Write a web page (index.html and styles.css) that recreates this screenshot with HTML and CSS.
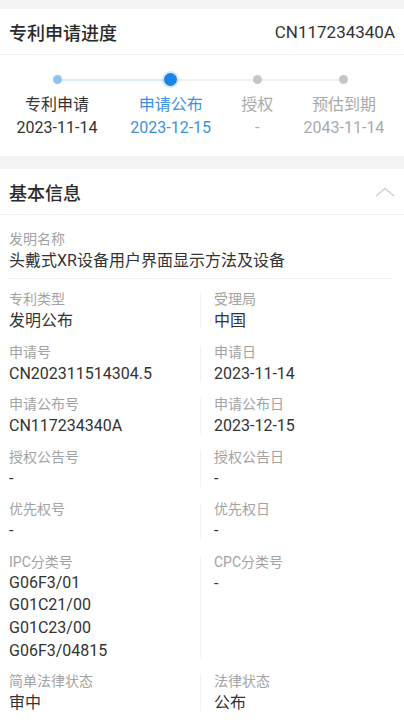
FILE: index.html
```html
<!DOCTYPE html>
<html lang="zh-CN">
<head>
  <meta charset="UTF-8" />
  <meta name="viewport" content="width=device-width, initial-scale=1.0" />
  <title>专利详情</title>
  <link rel="stylesheet" href="styles.css">
</head>
<body>
  <div class="card progress">
    <div class="card-head">
      <span class="card-title">专利申请进度</span>
      <span class="pub-no">CN117234340A</span>
    </div>
    <div class="steps">
      <div class="track track-done"></div>
      <div class="track track-todo"></div>
      <div class="step done">
        <i class="dot"></i>
        <div class="step-name">专利申请</div>
        <div class="step-date">2023-11-14</div>
      </div>
      <div class="step current">
        <i class="dot"></i>
        <div class="step-name">申请公布</div>
        <div class="step-date">2023-12-15</div>
      </div>
      <div class="step todo">
        <i class="dot"></i>
        <div class="step-name">授权</div>
        <div class="step-date">-</div>
      </div>
      <div class="step todo">
        <i class="dot"></i>
        <div class="step-name">预估到期</div>
        <div class="step-date">2043-11-14</div>
      </div>
    </div>
  </div>

  <div class="card info">
    <div class="card-head">
      <span class="card-title">基本信息</span>
      <svg class="chevron" width="20" height="10" viewBox="0 0 20 10">
        <polyline points="1,9 10,1.5 19,9" fill="none" stroke="#d2d2d2" stroke-width="1.5" />
      </svg>
    </div>
    <div class="info-body">
      <div class="field full">
        <div class="label">发明名称</div>
        <div class="value">头戴式XR设备用户界面显示方法及设备</div>
      </div>
      <div class="fields">
        <div class="field">
          <div class="label">专利类型</div>
          <div class="value">发明公布</div>
        </div>
        <div class="field right">
          <div class="label">受理局</div>
          <div class="value">中国</div>
        </div>
        <div class="field">
          <div class="label">申请号</div>
          <div class="value">CN202311514304.5</div>
        </div>
        <div class="field right">
          <div class="label">申请日</div>
          <div class="value">2023-11-14</div>
        </div>
        <div class="field">
          <div class="label">申请公布号</div>
          <div class="value">CN117234340A</div>
        </div>
        <div class="field right">
          <div class="label">申请公布日</div>
          <div class="value">2023-12-15</div>
        </div>
        <div class="field">
          <div class="label">授权公告号</div>
          <div class="value">-</div>
        </div>
        <div class="field right">
          <div class="label">授权公告日</div>
          <div class="value">-</div>
        </div>
        <div class="field">
          <div class="label">优先权号</div>
          <div class="value">-</div>
        </div>
        <div class="field right">
          <div class="label">优先权日</div>
          <div class="value">-</div>
        </div>
        <div class="field">
          <div class="label">IPC分类号</div>
          <div class="value multi">G06F3/01<br>G01C21/00<br>G01C23/00<br>G06F3/04815</div>
        </div>
        <div class="field right">
          <div class="label">CPC分类号</div>
          <div class="value">-</div>
        </div>
        <div class="field">
          <div class="label">简单法律状态</div>
          <div class="value">审中</div>
        </div>
        <div class="field right">
          <div class="label">法律状态</div>
          <div class="value">公布</div>
        </div>
      </div>
    </div>
  </div>
</body>
</html>
```

FILE: styles.css
```css
body {
  margin: 0;
  background: #f4f4f4;
  font-family: Roboto, "Noto Sans CJK SC", sans-serif;
  color: #333;
  padding-top: 9px;
}
.card {
  background: #fff;
}
.info {
  margin-top: 13px;
  min-height: 560px;
}
.card-head {
  height: 45px;
  padding: 0 9px;
  display: flex;
  align-items: center;
  justify-content: space-between;
  border-bottom: 1px solid #f0f0f0;
}
.card-title {
  font-size: 18px;
  font-weight: 500;
  color: #2a2a2a;
}
.pub-no {
  font-size: 17px;
  color: #333;
}

/* progress steps */
.steps {
  position: relative;
  display: grid;
  grid-template-columns: 86px 86px 32px 86px;
  justify-content: space-between;
  padding: 17px 17px 17px 14px;
}
.track {
  position: absolute;
  top: 24px;
  height: 2px;
}
.track-done {
  left: 57px;
  width: 114px;
  background: #d9ebf9;
}
.track-todo {
  left: 171px;
  right: 60px;
  background: #f1f1f1;
}
.step {
  position: relative;
  display: flex;
  flex-direction: column;
  align-items: center;
  white-space: nowrap;
}
.dot {
  height: 14px;
  display: flex;
  align-items: center;
}
.dot::before {
  content: "";
  width: 9px;
  height: 9px;
  border-radius: 50%;
  background: #c6c6c6;
}
.done .dot::before {
  background: #8cc5f3;
}
.current .dot::before {
  width: 13px;
  height: 13px;
  background: #1a84ea;
  box-shadow: 0 0 0 2px rgba(26, 132, 234, 0.18);
}
.step-name {
  margin-top: 7px;
  font-size: 16px;
  line-height: 24px;
}
.step-date {
  font-size: 16px;
  line-height: 22px;
}
.done .step-name,
.done .step-date {
  color: #333;
}
.current .step-name,
.current .step-date {
  color: #3d92e0;
}
.todo .step-name,
.todo .step-date {
  color: #aaa;
}

/* basic info */
.info-body {
  padding: 0 9px 10px;
}
.field.full {
  padding: 14px 0 5px;
  border-bottom: 1px solid #f0f0f0;
  margin-right: 2px;
}
.fields {
  display: grid;
  grid-template-columns: 191px 1fr;
  row-gap: 8.5px;
  padding-top: 10px;
}
.field.right {
  position: relative;
  padding-left: 14px;
}
.field.right::before {
  content: "";
  position: absolute;
  left: 0;
  top: 4px;
  bottom: 4px;
  width: 1px;
  background: #f2f2f2;
}
.label {
  font-size: 14px;
  line-height: 20px;
  color: #a3a3a3;
}
.value {
  font-size: 16px;
  line-height: 24px;
  color: #333;
}
.value.multi {
  line-height: 22.7px;
}
```
